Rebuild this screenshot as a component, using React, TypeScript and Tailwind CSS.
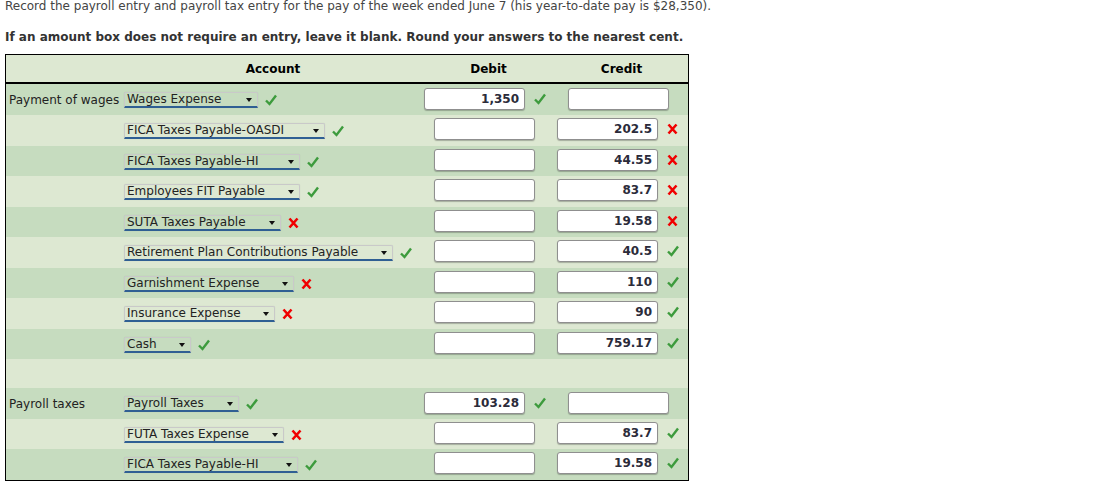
import React from 'react';

type Mark = 'ok' | 'bad' | null;

type Row = {
  label?: string;
  account: string;
  selectW: number;
  accountMark: Mark;
  debit?: string;
  credit?: string;
  amountMark: Mark;
  side: 'debit' | 'credit';
};

const rows: (Row | null)[] = [
  { label: 'Payment of wages', account: 'Wages Expense', selectW: 134, accountMark: 'ok', debit: '1,350', amountMark: 'ok', side: 'debit' },
  { account: 'FICA Taxes Payable-OASDI', selectW: 201, accountMark: 'ok', credit: '202.5', amountMark: 'bad', side: 'credit' },
  { account: 'FICA Taxes Payable-HI', selectW: 176, accountMark: 'ok', credit: '44.55', amountMark: 'bad', side: 'credit' },
  { account: 'Employees FIT Payable', selectW: 176, accountMark: 'ok', credit: '83.7', amountMark: 'bad', side: 'credit' },
  { account: 'SUTA Taxes Payable', selectW: 157, accountMark: 'bad', credit: '19.58', amountMark: 'bad', side: 'credit' },
  { account: 'Retirement Plan Contributions Payable', selectW: 269, accountMark: 'ok', credit: '40.5', amountMark: 'ok', side: 'credit' },
  { account: 'Garnishment Expense', selectW: 170, accountMark: 'bad', credit: '110', amountMark: 'ok', side: 'credit' },
  { account: 'Insurance Expense', selectW: 151, accountMark: 'bad', credit: '90', amountMark: 'ok', side: 'credit' },
  { account: 'Cash', selectW: 67, accountMark: 'ok', credit: '759.17', amountMark: 'ok', side: 'credit' },
  null,
  { label: 'Payroll taxes', account: 'Payroll Taxes', selectW: 115, accountMark: 'ok', debit: '103.28', amountMark: 'ok', side: 'debit' },
  { account: 'FUTA Taxes Expense', selectW: 160, accountMark: 'bad', credit: '83.7', amountMark: 'ok', side: 'credit' },
  { account: 'FICA Taxes Payable-HI', selectW: 174, accountMark: 'ok', credit: '19.58', amountMark: 'ok', side: 'credit' },
];

const MarkIcon = ({ mark }: { mark: Mark }) => {
  if (mark === 'ok') {
    return (
      <svg width="12" height="12" viewBox="0 0 12 12" className="shrink-0">
        <path d="M1 6.5 L4.5 10 L11 1.5" fill="none" stroke="#3d9b3d" strokeWidth="2.4" />
      </svg>
    );
  }
  if (mark === 'bad') {
    return (
      <svg width="11" height="12" viewBox="0 0 11 12" className="shrink-0">
        <path d="M1.5 1.5 L9.5 10.5 M9.5 1.5 L1.5 10.5" fill="none" stroke="#f00000" strokeWidth="2.6" />
      </svg>
    );
  }
  return <span className="w-[12px] shrink-0" />;
};

const FakeSelect = ({ text, w }: { text: string; w: number }) => (
  <div
    className="relative h-[16px] border border-b-2 border-[#c9c9c9] border-b-[#2f5f93] rounded-t-[2px] pl-[2px] text-[12px] leading-[13px] text-[#222] whitespace-nowrap shadow-[0_0_1px_rgba(0,0,0,0.15)]"
    style={{ width: w }}
  >
    {text}
    <svg width="6" height="4" viewBox="0 0 6 4" className="absolute right-[5px] top-[5px]">
      <path d="M0 0 H6 L3 4 Z" fill="#111" />
    </svg>
  </div>
);

const Amount = ({ value }: { value?: string }) => (
  <div className="w-[101px] h-[22px] bg-white border border-[#8f8f8f] rounded-[3px] shadow-[0_1px_1px_rgba(0,0,0,0.25)] px-[5px] text-right text-[12px] font-bold leading-[20px] text-[#2b2b3a]">
    {value ?? ''}
  </div>
);

export default function App() {
  return (
    <div className="bg-white w-[1098px] h-[484px] overflow-hidden text-[#333] text-[12px]" style={{ fontFamily: "'DejaVu Sans', Verdana, sans-serif" }}>
      <p className="ml-[5px] -mt-[1px] leading-[14px] text-[#444]">
        Record the payroll entry and payroll tax entry for the pay of the week ended June 7 (his year-to-date pay is $28,350).
      </p>
      <p className="ml-[5px] mt-[17px] leading-[14px] font-bold text-[#333]">
        If an amount box does not require an entry, leave it blank. Round your answers to the nearest cent.
      </p>

      <div className="ml-[5px] mt-[10px] w-[684px] border border-black">
        <div className="flex h-[29px] items-center bg-[#dde8d2] border-b-2 border-black font-bold text-black">
          <div className="w-[118px]" />
          <div className="w-[298px] text-center">Account</div>
          <div className="w-[133px] text-center">Debit</div>
          <div className="flex-1 text-center">Credit</div>
        </div>

        {rows.map((r, i) => {
          const bg = i % 2 === 0 ? 'bg-[#c6dcbf]' : 'bg-[#dde8d2]';
          if (!r) return <div key={i} className={`h-[29px] ${bg}`} />;
          return (
            <div key={i} className={`flex ${i === 0 ? 'h-[31px]' : 'h-[30.5px]'} ${bg}`}>
              <div className="w-[118px] pl-[3px] pt-[9px] leading-[14px] text-[#222]">{r.label}</div>
              <div className="w-[300px] flex items-center gap-[7px] self-start mt-[8px]">
                <FakeSelect text={r.account} w={r.selectW} />
                <MarkIcon mark={r.accountMark} />
              </div>
              {r.side === 'debit' ? (
                <>
                  <div className="w-[130px] flex items-center gap-[9px] self-start mt-[4px]">
                    <Amount value={r.debit} />
                    <MarkIcon mark={r.amountMark} />
                  </div>
                  <div className="flex-1 pt-[4px] pl-[14px]">
                    <Amount />
                  </div>
                </>
              ) : (
                <>
                  <div className="w-[130px] pt-[3px] pl-[10px]">
                    <Amount />
                  </div>
                  <div className="flex-1 flex items-center gap-[9px] self-start mt-[3px] pl-[3px]">
                    <Amount value={r.credit} />
                    <MarkIcon mark={r.amountMark} />
                  </div>
                </>
              )}
            </div>
          );
        })}
      </div>
    </div>
  );
}
